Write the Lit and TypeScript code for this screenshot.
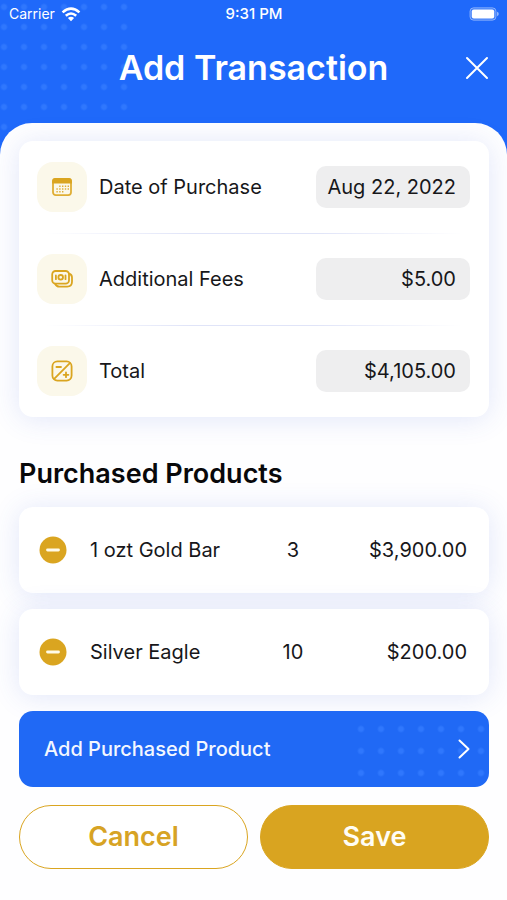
import { LitElement, html, css, svg } from "lit";
import { customElement, property, state } from "lit/decorators.js";

const calendarIcon = svg`
  <rect x="2" y="2.9" width="18" height="16.2" rx="2.8" fill="none" stroke="#dfae35" stroke-width="1.8"/>
  <path d="M1.1 7.4V5.2Q1.1 2 4.3 2h13.4q3.2 0 3.2 3.2v2.2z" fill="#daa520"/>
  <g fill="#dfae35">
    <path d="M8.2 9.6h1.4v1.4H8.2zM11 9.6h1.4v1.4H11zM13.8 9.6h1.4v1.4h-1.4zM16.6 9.6H18v1.4h-1.4z"/>
    <path d="M5.4 12.3h1.4v1.4H5.4zM8.2 12.3h1.4v1.4H8.2zM11 12.3h1.4v1.4H11zM13.8 12.3h1.4v1.4h-1.4z"/>
    <path d="M5.4 15h1.4v1.4H5.4zM8.2 15h1.4v1.4H8.2zM11 15h1.4v1.4H11zM16.6 12.3H18v1.4h-1.4z"/>
  </g>`;

const moneyIcon = svg`
  <g fill="none" stroke="#daa520" stroke-width="1.8" stroke-linecap="round" stroke-linejoin="round">
    <rect x="1.2" y="3" width="16.8" height="12.6" rx="3.4"/>
    <path d="M18.2 5.6q2.8 1 2.8 3.8v4.4q0 4.8-4.8 4.8H8.4q-3 0-4.2-2.6"/>
    <circle cx="9.7" cy="9.3" r="2.3"/>
    <path d="M4.9 7.4v3.8M14.5 7.4v3.8"/>
  </g>`;

const calcIcon = svg`
  <g fill="none" stroke="#daa520" stroke-width="1.8" stroke-linecap="round" stroke-linejoin="round">
    <rect x="1.4" y="1.4" width="19.2" height="19.2" rx="5"/>
    <path d="M3.4 18.6 18.6 3.4M5.4 7h4.6M12.6 14.8h4.8M15 12.4v4.8"/>
  </g>`;

interface Product {
  name: string;
  quantity: number;
  price: string;
}

@customElement("status-bar")
class StatusBar extends LitElement {
  static styles = css`
    :host {
      display: grid;
      grid-template-columns: 1fr auto 1fr;
      align-items: center;
      height: 28px;
      padding: 0 8px 0 9px;
      font-size: 14px;
    }
    .carrier {
      display: flex;
      align-items: center;
      gap: 6px;
    }
    .time {
      font-size: 15px;
      font-weight: 500;
    }
    .battery {
      justify-self: end;
    }
    svg {
      display: block;
    }
  `;

  render() {
    return html`
      <div class="carrier">
        <span>Carrier</span>
        <svg width="20" height="15" viewBox="0 0 20 15" fill="none" stroke="#fff" stroke-width="2.6">
          <path d="M1.6 5.4Q10-2.2 18.4 5.4M4.8 8.8q5.2-4.6 10.4 0" />
          <path d="M10 14.2 6.9 11q3.1-2.4 6.2 0z" fill="#fff" stroke="none" />
        </svg>
      </div>
      <span class="time">9:31 PM</span>
      <svg class="battery" width="30" height="14" viewBox="0 0 30 14">
        <rect x="1" y="0.8" width="26" height="12.4" rx="3.6" fill="#fff" fill-opacity="0.15" stroke="#fff" stroke-opacity="0.4" />
        <rect x="2.8" y="2.6" width="22.4" height="8.8" rx="2" fill="#fff" />
        <path d="M28 4.8q1.8 .6 1.8 2.2T28 9.2z" fill="#fff" fill-opacity="0.5" />
      </svg>
    `;
  }
}

@customElement("detail-row")
class DetailRow extends LitElement {
  @property() label = "";
  @property() value = "";
  @property({ attribute: false }) icon: unknown;

  static styles = css`
    :host {
      display: flex;
      align-items: center;
      gap: 12px;
      height: 92px;
    }
    .tile {
      display: grid;
      place-items: center;
      flex: none;
      width: 50px;
      height: 50px;
      border-radius: 16px;
      background: #fbf8ea;
    }
    label {
      flex: 1;
      white-space: nowrap;
    }
    input {
      box-sizing: border-box;
      width: 154px;
      height: 42px;
      padding: 0 14px 0 8px;
      border: 0;
      border-radius: 10px;
      background: #eeeeef;
      color: #17171a;
      font: inherit;
      text-align: right;
    }
  `;

  render() {
    return html`
      <span class="tile">
        <svg width="22" height="22" viewBox="0 0 22 22" aria-hidden="true">${this.icon}</svg>
      </span>
      <label for="field">${this.label}</label>
      <input id="field" type="text" .value=${this.value} />
    `;
  }
}

@customElement("app-root")
class AppRoot extends LitElement {
  @state() private products: Product[] = [
    { name: "1 ozt Gold Bar", quantity: 3, price: "$3,900.00" },
    { name: "Silver Eagle", quantity: 10, price: "$200.00" },
  ];

  private remove(product: Product) {
    this.products = this.products.filter((p) => p !== product);
  }

  static styles = css`
    :host {
      position: relative;
      display: flex;
      flex-direction: column;
      min-height: 100vh;
      font-family: Inter, "Liberation Sans", sans-serif;
      font-size: 20px;
      line-height: 24px;
      color: #17171a;
      background: #1f69fa;
    }
    .dots {
      position: absolute;
      background-image: radial-gradient(circle, #2f77fd 2px, transparent 4px);
      background-size: 20px 20px;
    }
    .backdrop {
      top: 0;
      left: 0;
      width: 130px;
      height: 150px;
      background-position: -6px -3px;
    }
    .top,
    .sheet {
      position: relative;
    }
    .top {
      color: #fff;
    }
    .title-bar {
      display: grid;
      grid-template-columns: 1fr auto 1fr;
      align-items: center;
      height: 80px;
      padding: 0 18px 15px;
    }
    h1 {
      grid-column: 2;
      margin: 0;
      font-size: 34px;
      font-weight: 600;
      line-height: 40px;
    }
    button {
      margin: 0;
      padding: 0;
      border: 0;
      background: none;
      color: inherit;
      font: inherit;
      cursor: pointer;
    }
    svg {
      display: block;
    }
    .close {
      justify-self: end;
    }
    .sheet {
      display: flex;
      flex: 1;
      flex-direction: column;
      padding: 18px 18px 32px 19px;
      border-radius: 32px 32px 0 0;
      background: #fefeff;
    }
    .card {
      border-radius: 14px;
      background: #fff;
      box-shadow: 0 2px 28px rgba(60, 95, 215, 0.15);
    }
    .details {
      padding: 0 19px 0 18px;
    }
    .divider {
      height: 1px;
      margin: 0 8px -1px;
      border: 0;
      background: linear-gradient(90deg, transparent, #e0e4f8 35%, #e0e4f8 65%, transparent);
    }
    h2 {
      margin: 41px 0 17px;
      font-size: 27px;
      font-weight: 600;
      line-height: 32px;
      color: #08080a;
    }
    ul {
      display: flex;
      flex-direction: column;
      gap: 16px;
      margin: 0;
      padding: 0;
      list-style: none;
    }
    .product {
      display: grid;
      grid-template-columns: 28px 1fr 40px 154px;
      align-items: center;
      height: 86px;
      padding: 0 22px 0 20px;
    }
    .name {
      padding-left: 23px;
    }
    .quantity {
      text-align: center;
    }
    .price {
      text-align: right;
    }
    .add {
      position: relative;
      display: flex;
      align-items: center;
      justify-content: space-between;
      height: 76px;
      margin: 16px 0 18px;
      padding: 0 18px 0 25px;
      border-radius: 14px;
      overflow: hidden;
      background: #2069f5;
      color: #f3f7ff;
      font-weight: 500;
    }
    .add .dots {
      top: 7px;
      right: 0;
      width: 138px;
      height: 66px;
      background-size: 20px 22px;
    }
    .add svg {
      position: relative;
    }
    .actions {
      display: grid;
      grid-template-columns: 1fr 1fr;
      gap: 12px;
    }
    .action {
      height: 64px;
      border: 1px solid #daa520;
      border-radius: 32px;
      font-size: 27px;
      font-weight: 600;
      color: #d7a324;
      background: #fff;
    }
    .primary {
      background: #d9a420;
      color: #fffdf5;
    }
  `;

  render() {
    return html`
      <div class="backdrop dots"></div>
      <header class="top">
        <status-bar></status-bar>
        <div class="title-bar">
          <h1>Add Transaction</h1>
          <button class="close" aria-label="Close">
            <svg width="24" height="24" viewBox="0 0 24 24" stroke="#fff" stroke-width="2" stroke-linecap="round">
              <path d="M2 2l20 20M22 2 2 22" />
            </svg>
          </button>
        </div>
      </header>
      <main class="sheet">
        <section class="card details">
          <detail-row label="Date of Purchase" value="Aug 22, 2022" .icon=${calendarIcon}></detail-row>
          <hr class="divider" />
          <detail-row label="Additional Fees" value="$5.00" .icon=${moneyIcon}></detail-row>
          <hr class="divider" />
          <detail-row label="Total" value="$4,105.00" .icon=${calcIcon}></detail-row>
        </section>
        <h2>Purchased Products</h2>
        <ul>
          ${this.products.map(
            (p) => html`
              <li class="card product">
                <button aria-label="Remove ${p.name}" @click=${() => this.remove(p)}>
                  <svg width="28" height="28" viewBox="0 0 28 28">
                    <circle cx="14" cy="14" r="13.5" fill="#daa520" />
                    <path d="M8.5 14h11" stroke="#fffbe9" stroke-width="2.8" stroke-linecap="round" />
                  </svg>
                </button>
                <span class="name">${p.name}</span>
                <span class="quantity">${p.quantity}</span>
                <span class="price">${p.price}</span>
              </li>
            `
          )}
        </ul>
        <button class="add">
          <span class="dots"></span>
          <span>Add Purchased Product</span>
          <svg width="14" height="22" viewBox="0 0 14 22" fill="none" stroke="#fff" stroke-width="2" stroke-linecap="round" stroke-linejoin="round">
            <path d="M2.5 2.5 11.5 11l-9 8.5" />
          </svg>
        </button>
        <div class="actions">
          <button class="action">Cancel</button>
          <button class="action primary">Save</button>
        </div>
      </main>
    `;
  }
}
